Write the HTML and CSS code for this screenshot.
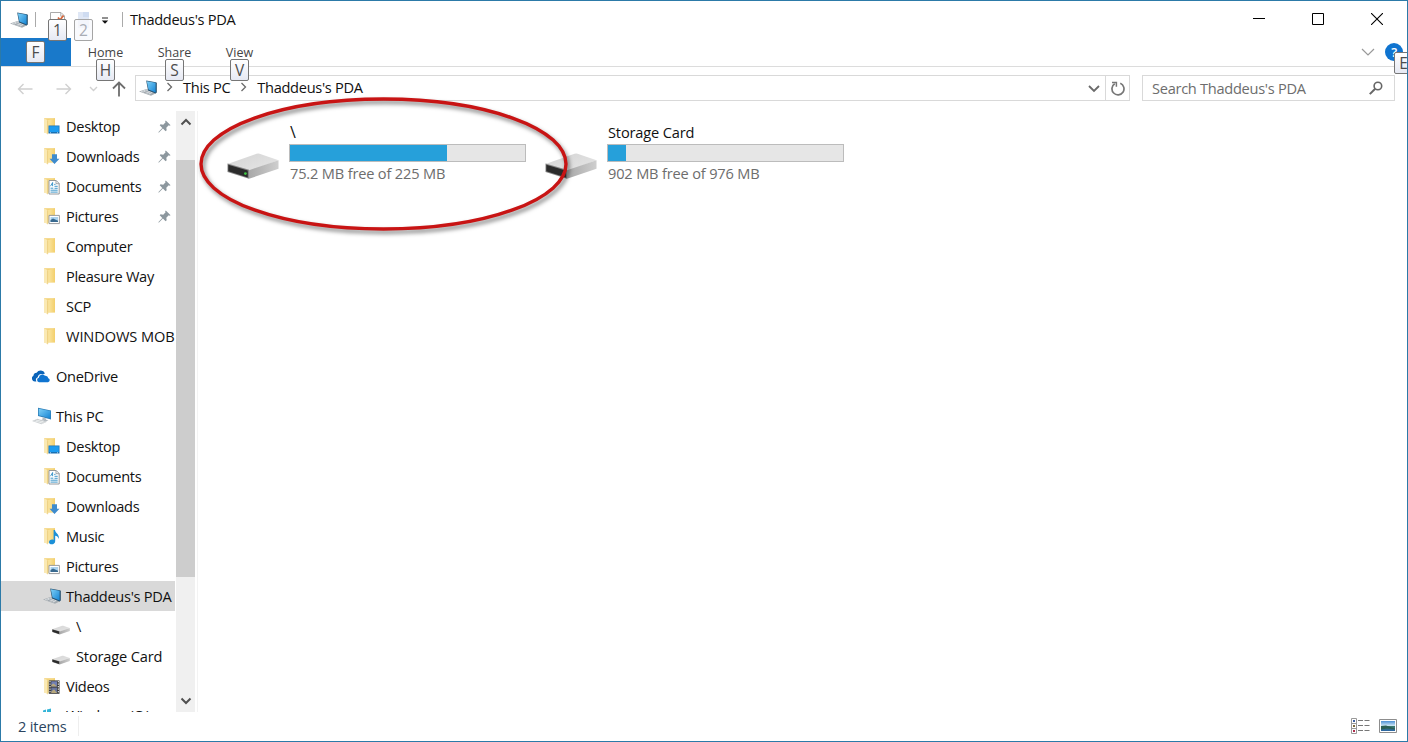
FILE: index.html
```html
<!DOCTYPE html>
<html lang="en">
<head>
  <meta charset="UTF-8">
  <meta name="viewport" content="width=device-width, initial-scale=1.0">
  <title>Thaddeus's PDA</title>
  <link rel="stylesheet" href="styles.css">
</head>
<body>
  <!-- Shared icons -->
  <svg class="defs" width="0" height="0">
    <defs>
      <linearGradient id="screen" x1="0" y1="0" x2="1" y2="1">
        <stop offset="0" stop-color="#7fd0f7"/>
        <stop offset="1" stop-color="#1484d4"/>
      </linearGradient>
      <linearGradient id="paper" x1="0" y1="0" x2="1" y2="0">
        <stop offset="0" stop-color="#fbe7a6"/>
        <stop offset="1" stop-color="#f3cf6b"/>
      </linearGradient>
      <linearGradient id="driveTop" x1="0" y1="0" x2="1" y2="1">
        <stop offset="0" stop-color="#d4d4d4"/>
        <stop offset="1" stop-color="#e6e6e6"/>
      </linearGradient>
      <linearGradient id="driveSide" x1="0" y1="0" x2="1" y2="0">
        <stop offset="0" stop-color="#a8a8a8"/>
        <stop offset="1" stop-color="#cecece"/>
      </linearGradient>
      <linearGradient id="photo" x1="0" y1="0" x2="0" y2="1">
        <stop offset="0" stop-color="#4d91d6"/>
        <stop offset="0.5" stop-color="#d5ebf7"/>
        <stop offset="0.55" stop-color="#3b7a6c"/>
        <stop offset="1" stop-color="#2c66a8"/>
      </linearGradient>
      <symbol id="laptop" viewBox="0 0 19 16">
        <path d="M0 11.5 7.5 9 17 13.2 12 15.8z" fill="#a4abb0"/>
        <path d="M1.5 11.4 7.5 9.5 14 12.6 10.5 14.4z" fill="#dfe3e6"/>
        <path d="M3.5 11.5l7 2.4M6 10.6l6.5 2.5M5 12.8l3.5-2.2" stroke="#9199a0" stroke-width=".6"/>
        <path d="M7.2 .6 16.8 2.2Q17.8 2.4 17.8 3.3V12.6L16.6 13.6 9 10.4z" fill="#27506e"/>
        <path d="M7.8 1.2 16.6 2.8V12.4L9.5 9.5z" fill="url(#screen)"/>
      </symbol>
      <symbol id="pc" viewBox="0 0 20 18">
        <path d="M6 .8 19 3.4V12.4L6 9z" fill="#2f7fb8"/>
        <path d="M6.8 1.8 18.3 4.1V11.3L6.8 8.3z" fill="url(#screen)"/>
        <path d="M10.5 10.5l3.6 1v1.2l2.4.8-3 1-4.5-1.5 1.5-.6z" fill="#b3bac0"/>
        <path d="M0 14 5.5 11.8 15 14.8 9.5 17.2z" fill="#c7cbce"/>
        <path d="M2.2 14 11 16.3M4 13.2l8.7 2.2M4 15l4-2.2M7.5 16l4-2" stroke="#eef0f1" stroke-width=".7"/>
      </symbol>
      <symbol id="folder" viewBox="0 0 17 18">
        <path d="M1 1.2H12V15.5H1z" fill="#f3d37a"/>
        <path d="M4.8 3.2 12 1.2V15.2H4.8z" fill="url(#paper)"/>
        <path d="M1 1.2 4.8 3.3V17.4L1 15z" fill="#fae9b4"/>
        <path d="M4.7 3.3V17.2" stroke="#e2b850" stroke-width=".5"/>
      </symbol>
      <symbol id="desktop" viewBox="0 0 17 18">
        <use href="#folder" width="17" height="18"/>
        <path d="M5.5 8.5H16.5V16.5H5.5z" fill="#1a6fb0"/>
        <path d="M6.2 9.2H15.8V15H6.2z" fill="#1d9cf0"/>
        <path d="M7 15.8h1M14 15.8h1" stroke="#fff" stroke-width=".7"/>
      </symbol>
      <symbol id="downloads" viewBox="0 0 17 18">
        <use href="#folder" width="17" height="18"/>
        <path d="M9 7.3H14V11.8H16.5L11.5 17 6.5 11.8H9z" fill="#3e8bcd"/>
      </symbol>
      <symbol id="documents" viewBox="0 0 17 18">
        <use href="#folder" width="17" height="18"/>
        <path d="M6 3.5H13.2L16.2 6.5V17H6z" fill="#fff" stroke="#8b8f92" stroke-width=".9"/>
        <path d="M13 3.6V6.7H16.2" fill="none" stroke="#8b8f92" stroke-width=".8"/>
        <path d="M7.5 9.2 9.6 5.5V9.2M11.2 7.4H12.5M7.5 11.2H10.3M11.5 9.3H14.7M11.5 11.3H14.7M7.5 13.2H14.7M7.5 15.1H14.7" fill="none" stroke="#2b8cc4" stroke-width=".9"/>
      </symbol>
      <symbol id="pictures" viewBox="0 0 17 18">
        <use href="#folder" width="17" height="18"/>
        <path d="M6 8.4H16.4V16.6H6z" fill="#fff" stroke="#8d9194" stroke-width=".9"/>
        <path d="M7.5 10H15V15H7.5z" fill="#a9d2ee"/>
        <path d="M7.5 13 10 11.6 15 13.7V15H7.5z" fill="#38698f"/>
      </symbol>
      <symbol id="music" viewBox="0 0 17 18">
        <use href="#folder" width="17" height="18"/>
        <path d="M10.6 3H12C12.3 6.5 17 7.2 15.6 12C15.2 9.6 13.7 8.9 12.2 8.8V14.2C12.2 18 6 18.3 6 15.2C6 13 8.6 12 10.6 12.9z" fill="#1b90d8"/>
      </symbol>
      <symbol id="videos" viewBox="0 0 17 18">
        <use href="#folder" width="17" height="18"/>
        <path d="M5.8 3.4H16.5V16.8H5.8z" fill="#3a3a3a"/>
        <path d="M8.3 4.3H14V9.4H8.3z" fill="#7280b4"/>
        <path d="M8.3 10.6H14V15.9H8.3z" fill="#67749f"/>
        <path d="M8.3 8 10.5 6.5 14 9.4H8.3zM8.3 14.5 11 12.3 14 15.9H8.3z" fill="#b8a87c"/>
        <path d="M7 4V16.5M15.3 4V16.5" stroke="#fff" stroke-width="1" stroke-dasharray="1.3 1.2"/>
      </symbol>
      <symbol id="cloud" viewBox="0 0 18 13">
        <path d="M3 11.4A3 3 0 0 1 1.4 5.8 3.5 3.5 0 0 1 4.6 2.8 4.8 4.8 0 0 1 13 3.4L10.8 4.2A4.2 4.2 0 0 0 5.7 7.2 3 3 0 0 0 4.4 11.4z" fill="#0a63b8"/>
        <path d="M7 12.2A2.3 2.3 0 0 1 6.8 7.7 3.5 3.5 0 0 1 12.9 5.8 3 3 0 0 1 16.3 8.3 2 2 0 0 1 16 12.2z" fill="#0f74d0"/>
      </symbol>
      <symbol id="drive" viewBox="0 0 52 26">
        <path d="M.5 11 29.5 .8Q31 .3 32.5 .7L51.5 7.3 22.5 18z" fill="url(#driveTop)"/>
        <path d="M22 17.2 51.5 7.3V15.8L22 25.8z" fill="url(#driveSide)"/>
        <path d="M.5 10.5 22 16.8V25.8L.5 19z" fill="#858585"/>
        <path d="M1.3 11.8 20.8 17.5V24.4L1.3 18.3z" fill="#2b2b2b"/>
      </symbol>
      <symbol id="pin" viewBox="0 0 13 13">
        <path d="M7.8 .4 12.6 5.2 11.4 5.8 10.7 5.3 8.3 7.7 8.7 10.3 7.6 11.2 4.9 8.5 1 12.4 .4 12.5 .5 11.9 4.3 7.9 1.7 5.3 2.6 4.3 5.2 4.7 7.6 2.3 7.1 1.5z" fill="#8c979e"/>
      </symbol>
      <symbol id="crumb" viewBox="0 0 8 10">
        <path d="M1.5 1 5.5 5 1.5 9" fill="none" stroke="#6a6a6a" stroke-width="1.3"/>
      </symbol>
    </defs>
  </svg>

  <div class="window">
    <header class="titlebar">
      <div class="quick-access">
        <svg class="app-icon" width="19" height="16"><use href="#laptop"/></svg>
        <span class="divider"></span>
        <div class="quick-btn">
          <svg width="16" height="16" viewBox="0 0 16 16">
            <path d="M.5 .5H11L14.5 4V15H.5z" fill="#fff" stroke="#aaa"/>
            <path d="M10.8 .8V4.2H14.2" fill="none" stroke="#aaa"/>
            <path d="M8 5.5 10 8 13.5 3.5" fill="none" stroke="#d9683c" stroke-width="1.8"/>
          </svg>
          <span class="keytip">1</span>
        </div>
        <div class="quick-btn faded">
          <svg width="12" height="16" viewBox="0 0 12 16">
            <path d="M0 0H11V16H0z" fill="#dfe7f5"/>
            <path d="M5 0H11V5H5z" fill="#cfdcf1"/>
          </svg>
          <span class="keytip">2</span>
        </div>
        <svg class="customize" width="8" height="8" viewBox="0 0 8 8"><path d="M1 1H7" stroke="#222"/><path d="M.8 3.5H7.2L4 6.8z" fill="#111"/></svg>
        <span class="divider"></span>
      </div>
      <h1>Thaddeus's PDA</h1>
      <div class="window-controls">
        <svg width="12" height="12" viewBox="0 0 12 12"><path d="M0 5.5H12" stroke="#000"/></svg>
        <svg width="12" height="12" viewBox="0 0 12 12"><path d="M.5 .5H11.5V11.5H.5z" fill="none" stroke="#000"/></svg>
        <svg width="12" height="12" viewBox="0 0 12 12"><path d="M0 0 12 12M12 0 0 12" stroke="#000" stroke-width="1.1"/></svg>
      </div>
    </header>

    <nav class="ribbon">
      <div class="tab file"><span class="keytip">F</span></div>
      <div class="tab">Home<span class="keytip">H</span></div>
      <div class="tab">Share<span class="keytip">S</span></div>
      <div class="tab">View<span class="keytip">V</span></div>
      <div class="ribbon-right">
        <svg width="14" height="8" viewBox="0 0 14 8"><path d="M1 1 7 7 13 1" fill="none" stroke="#999" stroke-width="1.2"/></svg>
        <div class="help">?<span class="keytip">E</span></div>
      </div>
    </nav>

    <div class="address-row">
      <div class="nav-buttons">
        <svg width="16" height="12" viewBox="0 0 16 12"><path d="M15.5 6H1.5M6.5 1 1.5 6 6.5 11" fill="none" stroke="#d0d0d0" stroke-width="1.4"/></svg>
        <svg width="16" height="12" viewBox="0 0 16 12"><path d="M.5 6H14.5M9.5 1 14.5 6 9.5 11" fill="none" stroke="#d0d0d0" stroke-width="1.4"/></svg>
        <svg width="9" height="6" viewBox="0 0 9 6"><path d="M1 1 4.5 4.5 8 1" fill="none" stroke="#d0d0d0" stroke-width="1.4"/></svg>
        <svg width="14" height="16" viewBox="0 0 14 16"><path d="M7 15.5V1.5M1 7.5 7 1.5 13 7.5" fill="none" stroke="#6e6e6e" stroke-width="1.8"/></svg>
      </div>
      <div class="address">
        <svg class="address-icon" width="19" height="16"><use href="#laptop"/></svg>
        <svg class="crumb" width="8" height="10"><use href="#crumb"/></svg>
        <span class="place">This PC</span>
        <svg class="crumb" width="8" height="10"><use href="#crumb"/></svg>
        <span class="place">Thaddeus's PDA</span>
        <svg class="history" width="12" height="8" viewBox="0 0 12 8"><path d="M1 1 6 6 11 1" fill="none" stroke="#6a6a6a" stroke-width="1.8"/></svg>
        <div class="refresh">
          <svg width="14" height="15" viewBox="0 0 14 15"><path d="M9.3 2.3A6 6 0 1 1 3.7 2.8" fill="none" stroke="#777" stroke-width="1.7"/><path d="M1 1.4H5.4V5.8" fill="none" stroke="#777" stroke-width="1.5"/></svg>
        </div>
      </div>
      <div class="search">
        <span>Search Thaddeus's PDA</span>
        <svg width="14" height="14" viewBox="0 0 14 14"><circle cx="8.9" cy="5" r="3.8" fill="none" stroke="#666" stroke-width="1.6"/><path d="M6.2 7.7 .8 13.1" stroke="#666" stroke-width="2"/></svg>
      </div>
    </div>

    <main>
      <aside>
        <ul class="tree">
          <li><svg><use href="#desktop"/></svg>Desktop<svg class="pin"><use href="#pin"/></svg></li>
          <li><svg><use href="#downloads"/></svg>Downloads<svg class="pin"><use href="#pin"/></svg></li>
          <li><svg><use href="#documents"/></svg>Documents<svg class="pin"><use href="#pin"/></svg></li>
          <li><svg><use href="#pictures"/></svg>Pictures<svg class="pin"><use href="#pin"/></svg></li>
          <li><svg><use href="#folder"/></svg>Computer</li>
          <li><svg><use href="#folder"/></svg>Pleasure Way</li>
          <li><svg><use href="#folder"/></svg>SCP</li>
          <li class="wide"><svg><use href="#folder"/></svg>WINDOWS MOB</li>
          <li class="root"><svg><use href="#cloud"/></svg>OneDrive</li>
          <li class="root"><svg class="pc"><use href="#pc"/></svg>This PC</li>
          <li><svg><use href="#desktop"/></svg>Desktop</li>
          <li><svg><use href="#documents"/></svg>Documents</li>
          <li><svg><use href="#downloads"/></svg>Downloads</li>
          <li><svg><use href="#music"/></svg>Music</li>
          <li><svg><use href="#pictures"/></svg>Pictures</li>
          <li class="selected"><svg class="device"><use href="#laptop"/></svg>Thaddeus's PDA</li>
          <li class="sub"><svg><use href="#drive"/></svg>\</li>
          <li class="sub"><svg><use href="#drive"/></svg>Storage Card</li>
          <li><svg><use href="#videos"/></svg>Videos</li>
          <li class="last"><svg viewBox="0 0 17 18"><path d="M-1 4.8 3 3.6V9H-1zM4 3.4 8 2.6V9H4z" fill="#35b5d8"/></svg>Windows (C:)</li>
        </ul>
        <div class="scrollbar">
          <svg width="12" height="8" viewBox="0 0 12 8"><path d="M1.5 6.5 6 2 10.5 6.5" fill="none" stroke="#505050" stroke-width="2"/></svg>
          <div class="track"><div class="thumb"></div></div>
          <svg width="12" height="8" viewBox="0 0 12 8"><path d="M1.5 1.5 6 6 10.5 1.5" fill="none" stroke="#505050" stroke-width="2"/></svg>
        </div>
      </aside>

      <section class="content">
        <div class="drive">
          <svg width="52" height="26" viewBox="0 0 52 26"><use href="#drive"/><circle cx="18.4" cy="20.6" r="1.4" fill="#3fc743"/></svg>
          <div class="drive-info">
            <h2 class="root-name">\</h2>
            <div class="bar"><div class="used" style="width: 67%"></div></div>
            <p>75.2 MB free of 225 MB</p>
          </div>
        </div>
        <div class="drive">
          <svg width="52" height="26"><use href="#drive"/></svg>
          <div class="drive-info">
            <h2>Storage Card</h2>
            <div class="bar"><div class="used" style="width: 7.7%"></div></div>
            <p>902 MB free of 976 MB</p>
          </div>
        </div>
        <!-- Highlight around the first drive -->
        <svg class="highlight" width="380" height="146" viewBox="0 0 380 146">
          <ellipse cx="188.5" cy="70" rx="182.5" ry="65" fill="none" stroke="#c81414" stroke-width="3.4"/>
        </svg>
      </section>
    </main>

    <footer>
      <span class="count">2 items</span>
      <div class="views">
        <svg width="19" height="16" viewBox="0 0 19 16">
          <path d="M.5 .5H5.5V15.5H.5zM.5 5.5H5.5M.5 10.5H5.5" fill="none" stroke="#999"/>
          <path d="M2 3H4" stroke="#3c5fa0" stroke-width="2"/><path d="M2 8H4" stroke="#7d6a3c" stroke-width="2"/><path d="M2 13H4" stroke="#b02a4a" stroke-width="2"/>
          <path d="M7 2.5H12M13.5 2.5H18.5M7 7.5H12M13.5 7.5H18.5M7 12.5H12M13.5 12.5H18.5" stroke="#777"/>
        </svg>
        <svg width="18" height="14" viewBox="0 0 18 14"><path d="M.5 .5H17.5V13.5H.5z" fill="#fff" stroke="#8d8d8d"/><path d="M2 2H16V12H2z" fill="url(#photo)"/><path d="M2 7 7 6.5 16 9.5V10.5L8 9.5 2 10.5z" fill="#2c5f55"/></svg>
      </div>
    </footer>
  </div>
</body>
</html>
```

FILE: styles.css
```css
* {
  margin: 0;
  padding: 0;
  box-sizing: border-box;
}

body {
  font-family: "Open Sans", "Noto Sans", sans-serif;
  font-size: 14.6px;
  letter-spacing: -0.3px;
  color: #111;
  background-color: #fff;
  overflow: hidden;
}

svg {
  display: block;
  flex: none;
}

.defs {
  position: absolute;
}

h1, h2 {
  font-size: inherit;
  font-weight: normal;
}

.window {
  display: flex;
  flex-direction: column;
  width: 1408px;
  height: 742px;
  border: 1px solid #2c7aa8;
  background-color: #fff;
  overflow: hidden;
}

/* Title bar */
.titlebar {
  display: flex;
  height: 37px;
  align-items: center;
}

.titlebar h1 {
  padding-bottom: 2px;
}

.quick-access {
  display: flex;
  align-items: center;
  width: 129px;
  height: 37px;
  padding-left: 9px;
}

.divider {
  width: 1px;
  height: 15px;
  background-color: #aaa;
}

.app-icon {
  margin-right: 6px;
}

.quick-btn {
  position: relative;
  margin-left: 14px;
}

.quick-btn .keytip {
  left: -2px;
  top: 7px;
}

.quick-btn.faded {
  margin-left: 12px;
}

.faded .keytip {
  left: -4px;
  color: #a9adb5;
  border-color: #a5a5a5;
  background: rgba(248, 249, 252, 0.8);
}

.customize {
  margin: 2px 13px 0 11px;
}

.window-controls {
  display: flex;
  gap: 47px;
  margin-left: auto;
  padding: 0 24px 2px 0;
}

.keytip {
  position: absolute;
  z-index: 2;
  width: 19px;
  height: 22px;
  border: 1px solid #767676;
  border-radius: 2px;
  background: linear-gradient(#fff, #e6e9f3);
  color: #4c4c4c;
  font-size: 15.5px;
  line-height: 21px;
  letter-spacing: 0;
  text-align: center;
}

/* Ribbon */
.ribbon {
  display: flex;
  height: 29px;
  border-bottom: 1px solid #dcdcdc;
}

.tab {
  position: relative;
  width: 69px;
  padding-top: 6px;
  font-size: 12.5px;
  line-height: 18px;
  letter-spacing: 0;
  text-align: center;
  color: #444;
}

.tab:nth-child(4) {
  width: 61px;
}

.tab .keytip {
  left: 25px;
  top: 21px;
}

.tab:nth-child(4) .keytip {
  left: 21px;
}

.tab.file {
  width: 70px;
  height: 28px;
  background-color: #1979ca;
}

.file .keytip {
  top: 3px;
}

.ribbon-right {
  display: flex;
  align-items: center;
  gap: 10px;
  margin-left: auto;
  padding-right: 4px;
}

.help {
  position: relative;
  width: 18px;
  height: 18px;
  border-radius: 50%;
  background-color: #0f74d0;
  color: #fff;
  font-size: 13px;
  font-weight: 600;
  line-height: 18px;
  text-align: center;
}

.help .keytip {
  left: 9px;
  top: 9px;
  font-weight: normal;
}

/* Address bar */
.address-row {
  display: flex;
  height: 44px;
  padding: 8px 12px 0 16px;
}

.nav-buttons {
  display: flex;
  align-items: center;
  height: 27px;
  width: 118px;
}

.nav-buttons svg:nth-child(2) {
  margin-left: 23px;
}

.nav-buttons svg:nth-child(3) {
  margin-left: 17px;
}

.nav-buttons svg:nth-child(4) {
  margin-left: 14px;
}

.address {
  display: flex;
  align-items: center;
  width: 995px;
  height: 26px;
  border: 1px solid #d9d9d9;
}

.address-icon {
  margin-left: 3px;
}

.crumb {
  margin: -2px 9px 0 8px;
}

.place {
  padding-bottom: 2px;
}

.place + .crumb {
  margin: -2px 9px 0 10px;
}

.history {
  margin: 2px 5px 0 auto;
}

.refresh {
  display: flex;
  align-items: center;
  justify-content: center;
  width: 24px;
  height: 24px;
  border-left: 1px solid #d9d9d9;
}

.search {
  display: flex;
  align-items: center;
  justify-content: space-between;
  width: 253px;
  height: 26px;
  margin-left: 12px;
  padding: 0 11px 0 9px;
  border: 1px solid #d9d9d9;
  color: #6d6d6d;
  letter-spacing: -0.28px;
}

/* Navigation pane */
main {
  display: flex;
  height: 601px;
}

aside {
  display: flex;
  width: 197px;
  height: 601px;
  border-right: 1px solid #f3f3f3;
}

.tree {
  width: 175px;
  height: 601px;
  overflow: hidden;
  list-style: none;
}

.tree li {
  display: flex;
  align-items: center;
  width: 174px;
  height: 30px;
  padding-left: 42px;
  white-space: nowrap;
}

.tree svg {
  width: 17px;
  height: 18px;
  margin-right: 6px;
}

.tree svg.pin {
  width: 13px;
  height: 13px;
  margin: 0 4px 0 auto;
}

.tree .wide {
  letter-spacing: -0.1px;
}

.tree .root {
  margin-top: 10px;
  padding-left: 31px;
}

.tree .root svg {
  width: 18px;
  height: 13px;
}

.tree .root svg.pc {
  width: 20px;
  height: 18px;
  margin-right: 4px;
}

.tree svg.device {
  width: 19px;
  height: 16px;
  margin-right: 4px;
}

.tree .sub {
  padding-left: 51px;
  letter-spacing: -0.15px;
}

.tree .sub svg {
  width: 18px;
  height: 10px;
  margin: 8px 6px 0 0;
}

.tree .last {
  margin-top: -1px;
}

.tree .selected {
  background-color: #d9d9d9;
}

.scrollbar {
  display: flex;
  flex-direction: column;
  align-items: center;
  width: 19px;
  padding: 7px 0;
  background-color: #f0f0f0;
}

.track {
  flex: 1;
  width: 19px;
  padding-top: 34px;
}

.thumb {
  height: 417px;
  background-color: #cdcdcd;
}

/* Drives */
.content {
  position: relative;
  display: flex;
  flex: 1;
  gap: 20px;
  padding: 11px 0 0 29px;
}

.drive {
  display: flex;
  width: 298px;
}

.drive > svg {
  margin-top: 31px;
}

.drive-info {
  margin-left: 10px;
}

.drive h2 {
  padding-left: 1px;
  line-height: 21px;
  letter-spacing: -0.15px;
}

.drive .root-name {
  font-size: 16px;
}

.bar {
  width: 237px;
  height: 18px;
  margin-top: 1px;
  border: 1px solid #bcbcbc;
  background-color: #e6e6e6;
}

.used {
  height: 16px;
  background-color: #26a0da;
}

.drive p {
  padding-left: 1px;
  line-height: 23px;
  letter-spacing: -0.17px;
  color: #6d6d6d;
}

.highlight {
  position: absolute;
  left: -3px;
  top: -17px;
  filter: drop-shadow(2px 3px 2px rgba(0, 0, 0, 0.5));
}

/* Status bar */
footer {
  display: flex;
  align-items: center;
  justify-content: space-between;
  height: 29px;
  padding: 0 10px 2px 17px;
}

.count {
  width: 61px;
  border-right: 1px solid #eee;
  color: #2b4560;
  letter-spacing: -0.15px;
}

.views {
  display: flex;
  align-items: center;
  gap: 9px;
}
```
